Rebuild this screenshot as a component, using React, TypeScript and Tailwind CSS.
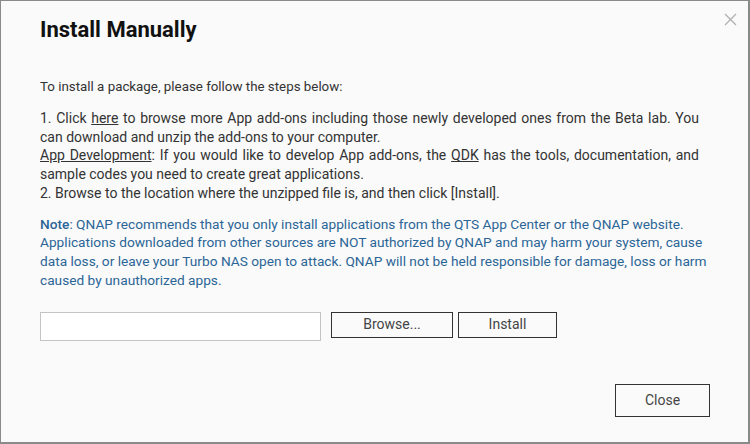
export default function App() {
  return (
    <div className="h-[444px] w-[750px] overflow-hidden bg-[#fafafa] font-['Roboto','Liberation_Sans',sans-serif]">
      <div className="relative flex h-full w-full flex-col border-t border-l border-r-2 border-b-2 border-[#8a8a8a] bg-[#fafafa] pl-[39px] pr-[38px]">
        <button className="absolute right-[11px] top-[11px] flex h-[14px] w-[14px] items-center justify-center text-[#b0b0b0]">
          <svg width="13" height="13" viewBox="0 0 13 13" fill="none" stroke="currentColor" strokeWidth="1.3">
            <path d="M1 1L12 12M12 1L1 12" />
          </svg>
        </button>

        <h1 className="mt-[14px] text-[22px] font-bold leading-[30px] text-[#111]">Install Manually</h1>

        <p className="mt-[33px] text-[13.33px] leading-[18.75px] text-[#333]">
          To install a package, please follow the steps below:
        </p>

        <div className="mt-[12px] mr-[11px] text-justify text-[14px] leading-[18.75px] text-[#333]">
          <p>
            1. Click <span className="underline">here</span> to browse more App add-ons including those newly developed
            ones from the Beta lab. You can download and unzip the add-ons to your computer.
          </p>
          <p>
            <span className="underline">App Development</span>: If you would like to develop App add-ons, the{' '}
            <span className="underline">QDK</span> has the tools, documentation, and sample codes you need to create
            great applications.
          </p>
          <p>2. Browse to the location where the unzipped file is, and then click [Install].</p>
        </div>

        <p className="mt-[12px] text-[13.7px] leading-[18.75px] text-[#2b6596]">
          <span className="font-medium">Note</span>: QNAP recommends that you only install applications from the QTS
          App Center or the QNAP website. Applications downloaded from other sources are NOT authorized by QNAP and may
          harm your system, cause data loss, or leave your Turbo NAS open to attack. QNAP will not be held responsible
          for damage, loss or harm caused by unauthorized apps.
        </p>

        <div className="mt-[22px] flex items-start">
          <input className="h-[29px] w-[281px] border border-[#c4c4c4] bg-white px-2 text-[13px] outline-none" />
          <button className="ml-[10px] h-[26px] w-[122px] border border-[#333] bg-[#fafafa] text-[14px] text-[#444]">
            Browse...
          </button>
          <button className="ml-[5px] h-[26px] w-[99px] border border-[#333] bg-[#fafafa] text-[14px] text-[#444]">
            Install
          </button>
        </div>

        <div className="mt-auto mb-[25px] flex justify-end">
          <button className="h-[33px] w-[95px] border border-[#333] bg-[#fafafa] text-[14px] text-[#444]">
            Close
          </button>
        </div>
      </div>
    </div>
  )
}
